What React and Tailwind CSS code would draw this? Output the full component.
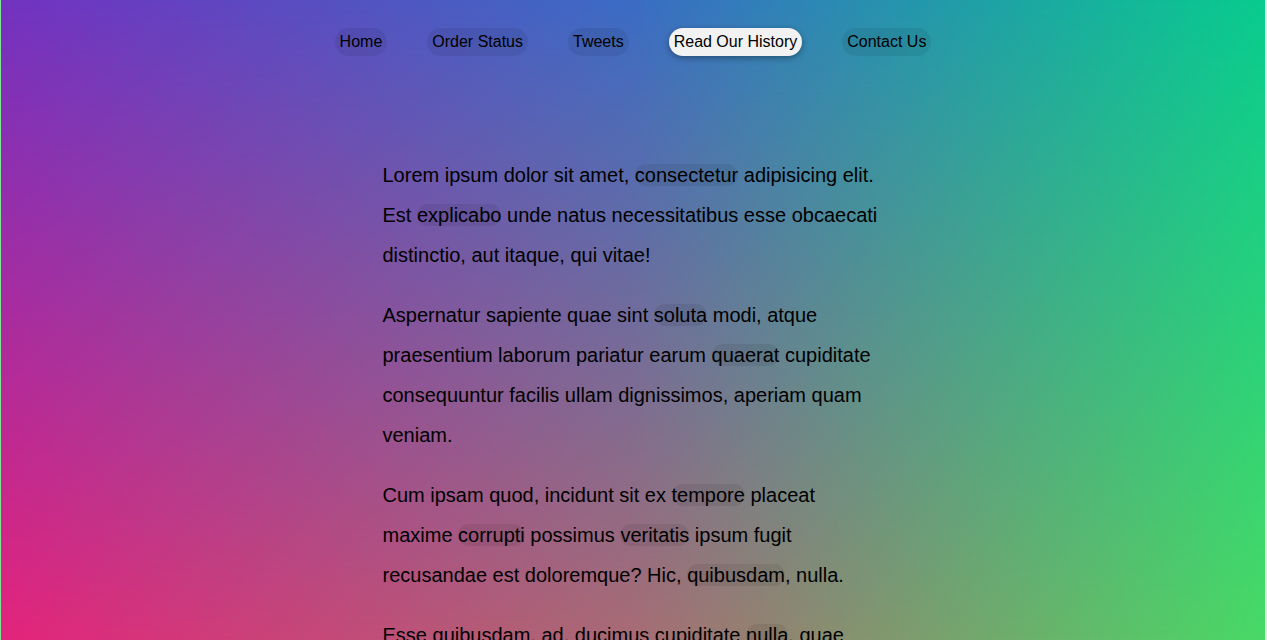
import React from "react";

const links = ["Home", "Order Status", "Tweets", "Read Our History", "Contact Us"];

const Mark = ({ children }) => (
  <span className="rounded-full bg-black/[0.07]">{children}</span>
);

const App = () => {
  const active = "Read Our History";

  return (
    <div
      className="relative h-screen overflow-hidden border-l border-r-2 border-l-white/30 border-r-[#e6e6e6] bg-[linear-gradient(to_right,#e4247c,#a86c74_50%,#48da66)] text-black"
      style={{ fontFamily: '"Liberation Sans", Arial, Helvetica, sans-serif' }}
    >
      {/* top colour layer, faded out toward the bottom */}
      <div className="pointer-events-none absolute inset-0 bg-[linear-gradient(to_right,#7232c0,#3a6cc4_50%,#08cb8e)] [mask-image:linear-gradient(to_bottom,black,transparent)]" />

      <div className="relative">
        <nav className="flex justify-center gap-10 pt-7">
          {links.map((link) => (
            <a
              key={link}
              href="#"
              className={`rounded-full p-[5px] text-base leading-[18px] ${
                link === active
                  ? "bg-[#f2f2f2] shadow-[0_2px_6px_rgba(0,0,0,0.35)]"
                  : "bg-black/[0.07]"
              }`}
            >
              {link}
            </a>
          ))}
        </nav>

        <main className="mx-auto mt-[99px] w-[501px] space-y-5 text-xl leading-10">
          <p>
            Lorem ipsum dolor sit amet, <Mark>consectetur</Mark> adipisicing
            elit. Est <Mark>explicabo</Mark> unde natus necessitatibus esse
            obcaecati distinctio, aut itaque, qui vitae!
          </p>
          <p>
            Aspernatur sapiente quae sint <Mark>soluta</Mark> modi, atque
            praesentium laborum pariatur earum <Mark>quaerat</Mark> cupiditate
            consequuntur facilis ullam dignissimos, aperiam quam veniam.
          </p>
          <p>
            Cum ipsam quod, incidunt sit ex <Mark>tempore</Mark> placeat maxime{" "}
            <Mark>corrupti</Mark> possimus <Mark>veritatis</Mark> ipsum fugit
            recusandae est doloremque? Hic, <Mark>quibusdam</Mark>, nulla.
          </p>
          <p>
            Esse quibusdam, ad, ducimus cupiditate <Mark>nulla</Mark>, quae
            magni odit totam ut consequatur eveniet sunt quam provident sapiente
            dicta neque quod.
          </p>
        </main>
      </div>
    </div>
  );
};

export default App;
